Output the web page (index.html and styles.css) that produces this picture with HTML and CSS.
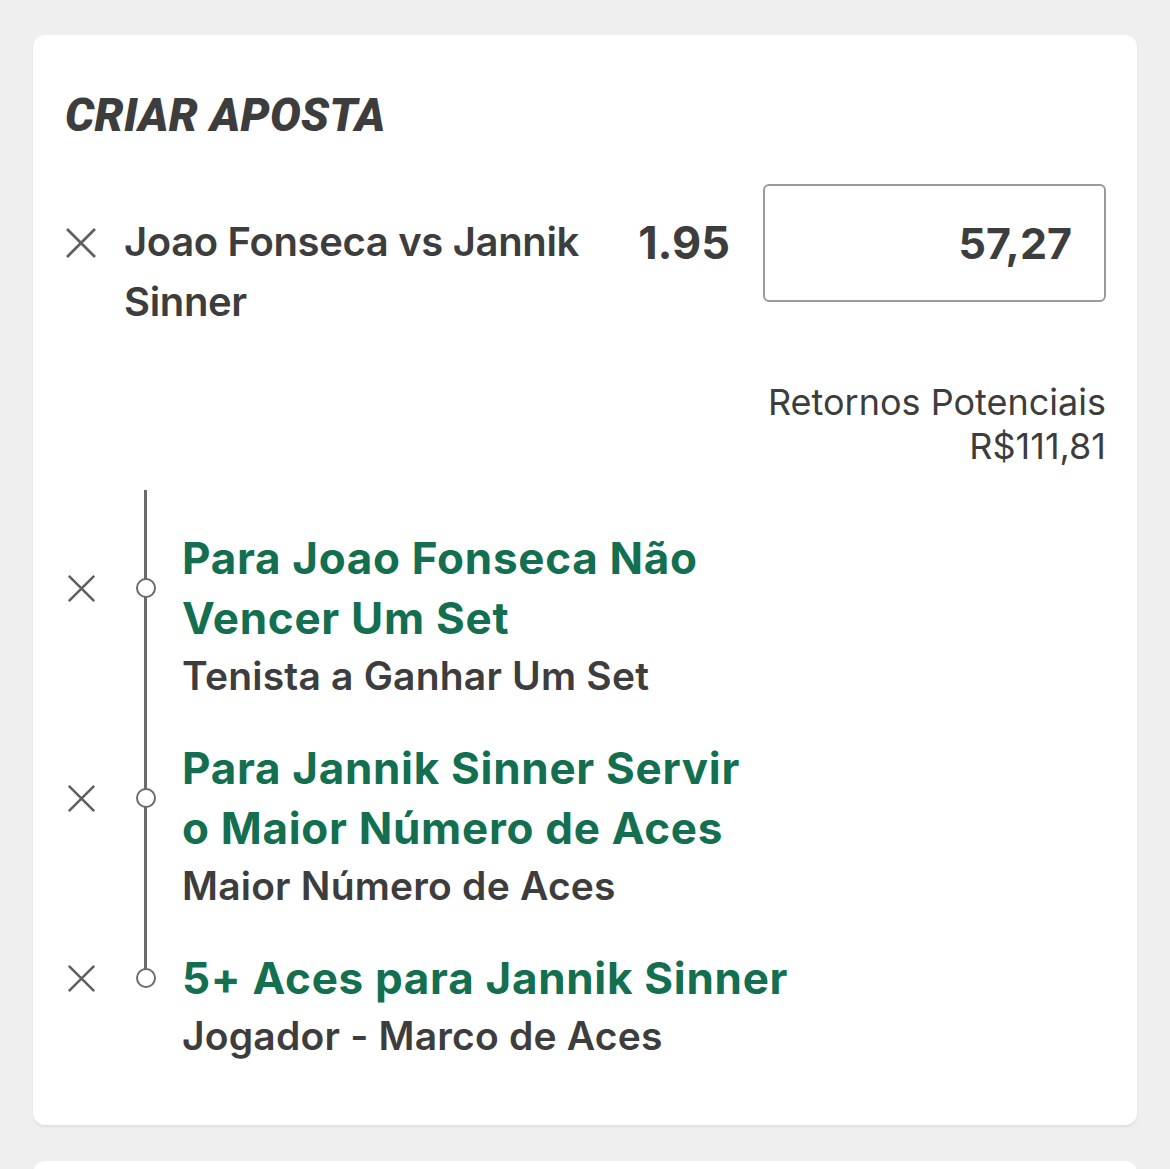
FILE: index.html
```html
<!DOCTYPE html>
<html>
    <head>
        <title>Criar Aposta</title>
        <link rel="stylesheet" href="styles.css">
    </head>

    <body>
        <div class="page">
            <section class="card slip">
                <h2 class="slip-title">CRIAR APOSTA</h2>

                <div class="bet-row">
                    <button class="remove" aria-label="Remover">
                        <svg viewBox="0 0 32 32" width="32" height="32"><path d="M2 2 L30 30 M30 2 L2 30"/></svg>
                    </button>
                    <div class="event-name">Joao Fonseca vs Jannik Sinner</div>
                    <div class="odds">1.95</div>
                    <div class="stake">57,27</div>
                </div>

                <div class="returns">
                    <div>Retornos Potenciais</div>
                    <div>R$111,81</div>
                </div>

                <ul class="legs">
                    <li class="leg">
                        <div class="leg-head">
                            <button class="remove small" aria-label="Remover">
                                <svg viewBox="0 0 32 32" width="29" height="29"><path d="M2 2 L30 30 M30 2 L2 30"/></svg>
                            </button>
                            <span class="dot"></span>
                            <div class="leg-title">Para Joao Fonseca Não<br>Vencer Um Set</div>
                        </div>
                        <div class="leg-market">Tenista a Ganhar Um Set</div>
                    </li>
                    <li class="leg">
                        <div class="leg-head">
                            <button class="remove small" aria-label="Remover">
                                <svg viewBox="0 0 32 32" width="29" height="29"><path d="M2 2 L30 30 M30 2 L2 30"/></svg>
                            </button>
                            <span class="dot"></span>
                            <div class="leg-title">Para Jannik Sinner Servir<br>o Maior Número de Aces</div>
                        </div>
                        <div class="leg-market">Maior Número de Aces</div>
                    </li>
                    <li class="leg">
                        <div class="leg-head">
                            <button class="remove small" aria-label="Remover">
                                <svg viewBox="0 0 32 32" width="29" height="29"><path d="M2 2 L30 30 M30 2 L2 30"/></svg>
                            </button>
                            <span class="dot"></span>
                            <div class="leg-title">5+ Aces para Jannik Sinner</div>
                        </div>
                        <div class="leg-market">Jogador - Marco de Aces</div>
                    </li>
                </ul>
            </section>

            <section class="card next"></section>
        </div>
    </body>
</html>
```

FILE: styles.css
```css
body {
    margin: 0;
    background-color: #efefef;
    font-family: Inter, Roboto, "Liberation Sans", sans-serif;
    color: #3d3d3d;
}

.page {
    display: flex;
    flex-direction: column;
    gap: 36px;
    padding: 35px 33px 0 33px;
}

.card {
    background-color: #fff;
    border-radius: 12px;
    box-shadow: 0 2px 3px rgba(0, 0, 0, 0.07);
}

.slip {
    padding: 57px 31px 61px 32px;
}

.next {
    height: 60px;
}

.slip-title {
    margin: 0;
    font-family: Roboto, "Liberation Sans", sans-serif;
    font-style: italic;
    font-weight: 900;
    font-size: 46px;
    line-height: 46px;
    letter-spacing: 0.3px;
    color: #3d3d3d;
}

.bet-row {
    display: flex;
    align-items: flex-start;
    margin-top: 46px;
}

.remove {
    background: none;
    border: none;
    padding: 0;
    width: 32px;
    height: 32px;
    display: flex;
    align-items: center;
    justify-content: center;
    flex-shrink: 0;
    cursor: pointer;
}

.remove svg path {
    stroke: #5f5f5f;
    stroke-width: 2.8;
    fill: none;
}

.bet-row .remove {
    margin-top: 43px;
}

.event-name {
    flex: 1;
    margin: 28px 0 0 27px;
    font-size: 40px;
    font-weight: 600;
    line-height: 60px;
    letter-spacing: -0.35px;
    max-width: 490px;
}

.odds {
    margin-left: auto;
    font-size: 45px;
    font-weight: bold;
    line-height: 118px;
}

.stake {
    box-sizing: border-box;
    width: 343px;
    height: 118px;
    margin-left: 33px;
    border: 2px solid #9a9a9a;
    border-radius: 6px;
    padding-right: 32px;
    text-align: right;
    font-size: 43px;
    font-weight: bold;
    line-height: 114px;
}

.returns {
    margin-top: 48px;
    text-align: right;
    font-size: 36px;
    line-height: 44px;
}

.legs {
    list-style: none;
    margin: 22px 0 0 0;
    padding: 0;
}

.leg {
    position: relative;
    padding-top: 34px;
}

.leg:first-child {
    padding-top: 38px;
}

/* timeline rail */
.leg::before {
    content: "";
    position: absolute;
    left: 79px;
    top: 0;
    bottom: 0;
    width: 3px;
    background-color: #6b6b6b;
}

.leg:last-child::before {
    bottom: 86px;
}

.leg-head {
    display: flex;
    align-items: center;
}

.dot {
    position: relative;
    box-sizing: border-box;
    width: 20px;
    height: 20px;
    margin-left: 39px;
    border: 2.5px solid #6b6b6b;
    border-radius: 50%;
    background-color: #fff;
    flex-shrink: 0;
}

.leg-title {
    margin-left: 26px;
    font-size: 44px;
    font-weight: bold;
    line-height: 60px;
    letter-spacing: 0.7px;
    color: #136f4f;
}

.leg-market {
    margin-left: 117px;
    font-size: 39px;
    font-weight: 600;
    line-height: 56px;
    letter-spacing: 0.2px;
}
```
